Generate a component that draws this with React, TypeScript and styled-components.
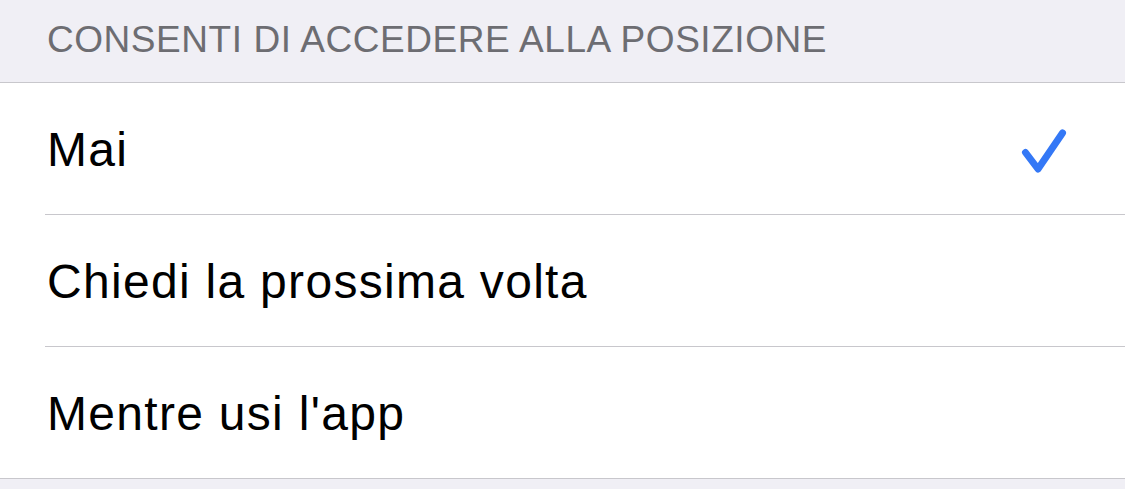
import React from "react";
import styled, { createGlobalStyle } from "styled-components";

const Global = createGlobalStyle`
  html, body { margin: 0; padding: 0; background: #f0eff5; }
  body { font-family: "Liberation Sans", Arial, sans-serif; -webkit-font-smoothing: antialiased; }
`;

const Page = styled.div`
  width: 1125px;
  height: 489px;
  background: #f0eff5;
  overflow: hidden;
`;

const SectionHeader = styled.div`
  height: 83px;
  box-sizing: border-box;
  padding-left: 47px;
  padding-top: 20px;
  font-size: 37px;
  line-height: 40px;
  color: #6d6d72;
  letter-spacing: 0.55px;
  border-bottom: 1px solid #c8c7cc;
`;

const List = styled.div`
  background: #ffffff;
  border-bottom: 1px solid #c8c7cc;
`;

const Row = styled.div<{ $last?: boolean }>`
  margin-left: 45px;
  height: 131px;
  display: flex;
  align-items: center;
  justify-content: space-between;
  padding-right: 57px;
  border-bottom: ${(p) => (p.$last ? "none" : "1px solid #c8c7cc")};
`;

const Label = styled.span`
  font-size: 48px;
  letter-spacing: 1.3px;
  color: #000000;
  padding-left: 2px;
  padding-top: 2px;
`;

const Check = () => (
  <svg width="48" height="48" viewBox="0 0 48 48" style={{ display: "block" }}>
    <path
      d="M5.5 27.5 L18 44 L42.5 8"
      fill="none"
      stroke="#3478f6"
      strokeWidth="7"
      strokeLinecap="round"
      strokeLinejoin="round"
    />
  </svg>
);

const options = ["Mai", "Chiedi la prossima volta", "Mentre usi l'app"];

export default function App() {
  return (
    <Page>
      <Global />
      <SectionHeader>CONSENTI DI ACCEDERE ALLA POSIZIONE</SectionHeader>
      <List>
        {options.map((o, i) => (
          <Row key={o} $last={i === options.length - 1}>
            <Label>{o}</Label>
            {i === 0 && <Check />}
          </Row>
        ))}
      </List>
    </Page>
  );
}
